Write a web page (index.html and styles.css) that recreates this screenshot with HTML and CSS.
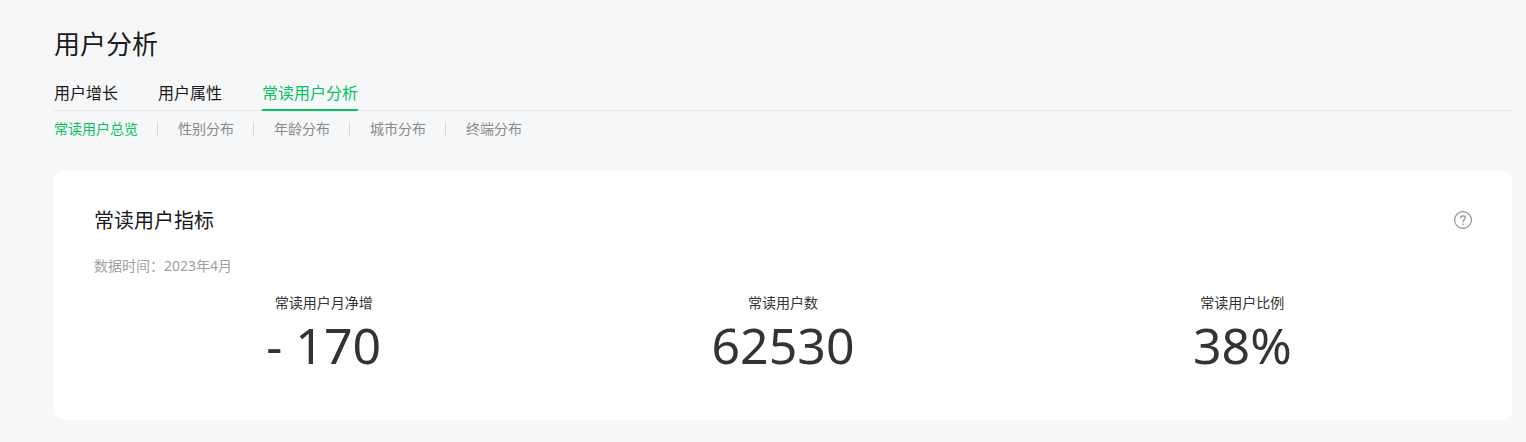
FILE: index.html
```html
<!DOCTYPE html>
<html>
<head>
<meta http-equiv="Content-Type" content="text/html; charset=utf-8" />
  <title>用户分析</title>
  <link rel="stylesheet" href="styles.css">
</head>
<body>
<div class="page">
  <h1 class="page-title">用户分析</h1>
  <div class="tabs">
    <a class="tab">用户增长</a>
    <a class="tab">用户属性</a>
    <a class="tab tab-on">常读用户分析</a>
  </div>
  <div class="subtabs">
    <a class="subtab subtab-on">常读用户总览</a>
    <a class="subtab">性别分布</a>
    <a class="subtab">年龄分布</a>
    <a class="subtab">城市分布</a>
    <a class="subtab">终端分布</a>
  </div>
  <div class="card">
    <div class="card-head">
      <h2 class="card-title">常读用户指标</h2>
      <svg class="help" width="18" height="18" viewBox="0 0 18 18">
        <circle cx="9" cy="9" r="8.4" fill="none" stroke="#8a8a8a" stroke-width="1.1"/>
        <path d="M6.6 7.2C6.6 5.8 7.6 4.9 9 4.9s2.4.9 2.4 2.1c0 1-.6 1.5-1.3 2-.7.5-1.1.9-1.1 1.8v.5" fill="none" stroke="#8a8a8a" stroke-width="1.1"/>
        <circle cx="9" cy="13.2" r=".8" fill="#8a8a8a"/>
      </svg>
    </div>
    <div class="data-time">数据时间：2023年4月</div>
    <div class="stats">
      <div class="stat">
        <div class="stat-label">常读用户月净增</div>
        <div class="stat-num">- 170</div>
      </div>
      <div class="stat">
        <div class="stat-label">常读用户数</div>
        <div class="stat-num">62530</div>
      </div>
      <div class="stat">
        <div class="stat-label">常读用户比例</div>
        <div class="stat-num">38%</div>
      </div>
    </div>
  </div>
</div>
</body>
</html>
```

FILE: styles.css
```css
* {
  box-sizing: border-box;
  margin: 0;
  padding: 0;
}

body {
  background-color: #f6f7f9;
  font-family: "Noto Sans", "Noto Sans CJK SC", sans-serif;
  color: #1a1a1a;
}

.page {
  padding: 26px 14px 22px 54px;
}

.page-title {
  font-size: 26px;
  font-weight: 400;
  line-height: 36px;
}

.tabs {
  display: flex;
  gap: 40px;
  margin-top: 19px;
  border-bottom: 1px solid #e2e4e6;
}

.tab {
  font-size: 16px;
  line-height: 24px;
  padding-bottom: 4px;
  margin-bottom: -1px;
  border-bottom: 2px solid transparent;
}

.tab-on {
  color: #07c160;
  border-bottom-color: #07c160;
}

.subtabs {
  display: flex;
  margin-top: 8px;
}

.subtab {
  font-size: 14px;
  line-height: 18px;
  color: #8a8a8a;
  padding: 0 19px 0 20px;
  border-left: 1px solid #d8d9db;
  height: 14px;
  display: flex;
  align-items: center;
  margin-top: 3px;
}

.subtab-on {
  color: #07c160;
  padding-left: 0;
  border-left: 0;
}

.card {
  background-color: #fff;
  border-radius: 10px;
  margin-top: 35px;
  height: 249px;
  padding: 36px 40px 0;
}

.card-head {
  display: flex;
  justify-content: space-between;
  align-items: center;
  height: 28px;
}

.card-title {
  font-size: 20px;
  font-weight: 400;
  line-height: 28px;
}

.help {
  margin-bottom: 2px;
}

.data-time {
  font-size: 14px;
  line-height: 20px;
  color: #a0a0a0;
  margin-top: 21px;
}

.stats {
  display: grid;
  grid-template-columns: repeat(3, 1fr);
  margin-top: 17px;
}

.stat {
  text-align: center;
}

.stat-label {
  font-size: 14px;
  line-height: 20px;
  color: #333;
}

.stat-num {
  font-size: 50px;
  line-height: 64px;
  color: #333;
}
```
